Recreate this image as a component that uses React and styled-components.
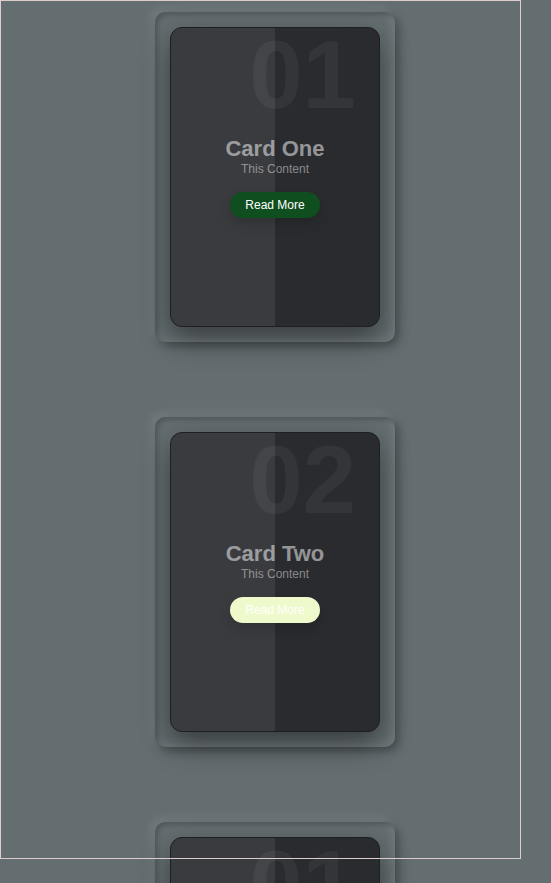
import React from "react";
import styled, { createGlobalStyle } from "styled-components";

const Global = createGlobalStyle`
  html, body { margin: 0; padding: 0; }
  body {
    background: #646e71;
    font-family: "Liberation Sans", Arial, sans-serif;
  }
`;

const Page = styled.div`
  position: relative;
  display: flex;
  flex-direction: column;
  align-items: center;
  gap: 75px;
  padding: 12px 1px 60px 0;
`;

const Frame = styled.div`
  position: absolute;
  top: 0;
  left: 0;
  width: 521px;
  height: 859px;
  box-sizing: border-box;
  border: 1px solid #dccdcd;
  pointer-events: none;
  z-index: 10;
`;

const Shell = styled.div`
  width: 240px;
  height: 330px;
  box-sizing: border-box;
  padding: 15px;
  border-radius: 10px;
  box-shadow: inset 3px 3px 4px rgba(0, 0, 0, 0.2),
    inset -3px -3px 10px rgba(255, 255, 255, 0.1),
    4px 4px 10px rgba(0, 0, 0, 0.3), -4px -4px 10px rgba(255, 255, 255, 0.1);
  display: flex;
`;

const Box = styled.div`
  position: relative;
  flex: 1;
  background: #2a2b2f;
  border: 1px solid #1e1f23;
  border-radius: 12px;
  box-shadow: 0 12px 30px rgba(0, 0, 0, 0.45);
  overflow: hidden;
  display: flex;
  align-items: center;
  justify-content: center;
  &::before {
    content: "";
    position: absolute;
    top: 0;
    left: 0;
    width: 50%;
    height: 100%;
    background: rgba(255, 255, 255, 0.08);
  }
`;

const Number = styled.div`
  position: absolute;
  top: -8px;
  right: 23px;
  font-size: 96px;
  font-weight: 700;
  color: rgba(255, 255, 255, 0.05);
`;

const Content = styled.div`
  position: relative;
  display: flex;
  flex-direction: column;
  align-items: center;
`;

const Title = styled.h3`
  margin: 0;
  font-size: 22px;
  line-height: 24px;
  font-weight: 700;
  color: rgba(255, 255, 255, 0.5);
`;

const Sub = styled.p`
  margin: 1px 0 0;
  font-size: 12px;
  line-height: 14px;
  color: rgba(255, 255, 255, 0.45);
`;

const Button = styled.a`
  display: block;
  margin-top: 16px;
  padding: 6px 15px;
  font-size: 12px;
  line-height: 14px;
  border-radius: 13px;
  color: #fff;
  background: ${(p) => p.$bg};
  text-decoration: none;
  box-shadow: 0 6px 12px rgba(0, 0, 0, 0.15);
`;

const cards = [
  { n: "01", title: "Card One", bg: "#0f4f1f" },
  { n: "02", title: "Card Two", bg: "#eefacb" },
  { n: "01", title: "Card Three", bg: "#0f4f1f" },
];

export default function App() {
  return (
    <>
      <Global />
      <Page>
        {cards.map((c, i) => (
          <Shell key={i}>
            <Box>
              <Number>{c.n}</Number>
              <Content>
                <Title>{c.title}</Title>
                <Sub>This Content</Sub>
                <Button href="#" $bg={c.bg}>Read More</Button>
              </Content>
            </Box>
          </Shell>
        ))}
        <Frame />
      </Page>
    </>
  );
}
